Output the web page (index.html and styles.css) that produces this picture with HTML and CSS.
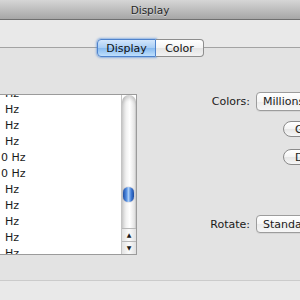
FILE: index.html
```html
<!DOCTYPE html>
<html lang="en">
<head>
    <meta charset="UTF-8">
    <title>Display</title>
    <link rel="stylesheet" href="styles.css">
</head>
<body>
    <div class="window">
        <div class="titlebar">Display</div>

        <div class="content">
            <div class="segmented">
                <button class="segment active" type="button">Display</button>
                <button class="segment" type="button">Color</button>
            </div>

            <div class="tabbox">
                <div class="listbox">
                    <div class="rows">
                        <div class="row">Hz</div>
                        <div class="row">Hz</div>
                        <div class="row">Hz</div>
                        <div class="row">Hz</div>
                        <div class="row wide">0 Hz</div>
                        <div class="row wide">0 Hz</div>
                        <div class="row">Hz</div>
                        <div class="row">Hz</div>
                        <div class="row">Hz</div>
                        <div class="row">Hz</div>
                        <div class="row">Hz</div>
                    </div>
                    <div class="scrollbar">
                        <div class="track">
                            <div class="thumb"></div>
                        </div>
                        <div class="arrow up">&#9650;</div>
                        <div class="arrow down">&#9660;</div>
                    </div>
                </div>

                <div class="options">
                    <div class="field">
                        <label class="field-label">Colors:</label>
                        <div class="popup">Millions</div>
                    </div>
                    <button class="pill first" type="button">Gather Windows</button>
                    <button class="pill second" type="button">Detect Displays</button>
                    <div class="field rotate">
                        <label class="field-label">Rotate:</label>
                        <div class="popup small">Standard</div>
                    </div>
                </div>
            </div>
        </div>
    </div>
</body>
</html>
```

FILE: styles.css
```css
body {
    margin: 0;
    font-family: 'DejaVu Sans', 'Liberation Sans', sans-serif;
    font-size: 11px;
    color: #1a1a1a;
    background-color: #e9e9e9;
    overflow: hidden;
}

.window {
    width: 300px;
    height: 300px;
    overflow: hidden;
    background-color: #e9e9e9;
}

.titlebar {
    height: 19px;
    line-height: 20px;
    text-align: center;
    font-size: 10.5px;
    color: #262626;
    text-shadow: 0 1px 0 rgba(255, 255, 255, 0.45);
    background: linear-gradient(#d6d6d6, #b9b9b9 60%, #a6a6a6);
    border-bottom: 1px solid #6f6f6f;
}

.content {
    padding-top: 19px;
}

.segmented {
    position: relative;
    z-index: 1;
    display: flex;
    justify-content: center;
    height: 18px;
    margin-bottom: -10px;
}

.segment {
    font-family: inherit;
    font-size: 11px;
    color: #111;
    height: 18px;
    padding: 0;
    margin: 0;
    border: 1px solid #8e8e8e;
    background: linear-gradient(#ffffff, #f3f3f3 50%, #e4e4e4 51%, #f2f2f2);
}

.segment.active {
    width: 59px;
    margin-left: 1px;
    border-color: #4f83cc;
    border-radius: 4px 0 0 4px;
    background: linear-gradient(#d3e6fb, #a7cdf5 50%, #86b9ef 51%, #bfe0fd);
    box-shadow: 0 0 2px 1px rgba(80, 140, 220, 0.6);
}

.segment:last-child {
    width: 48px;
    border-left: none;
    border-radius: 0 4px 4px 0;
}

.tabbox {
    display: flex;
    align-items: flex-start;
    height: 234px;
    padding-top: 44px;
    box-sizing: border-box;
    background-color: #e3e3e3;
    border-top: 1px solid #a3a3a3;
    border-bottom: 1px solid #cbcbcb;
}

.listbox {
    display: flex;
    flex-shrink: 0;
    width: 138px;
    height: 161px;
    margin-top: 2px;
    margin-left: -1px;
    box-sizing: border-box;
    background-color: #fff;
    border: 1px solid #9b9b9b;
    overflow: hidden;
}

.rows {
    flex: 1;
    margin-top: -9px;
}

.row {
    height: 16px;
    line-height: 16px;
    padding-left: 5px;
    font-size: 11px;
    white-space: nowrap;
}

.row.wide {
    padding-left: 1px;
}

.scrollbar {
    display: flex;
    flex-direction: column;
    width: 14px;
    border-left: 1px solid #c4c4c4;
}

.track {
    flex: 1;
    padding-top: 92px;
    border-radius: 7px 7px 0 0;
    background: linear-gradient(90deg, #cdcdcd, #f2f2f2 30%, #ffffff 55%, #e4e4e4 90%, #c8c8c8);
    box-shadow: inset 0 5px 4px -2px rgba(0, 0, 0, 0.18);
}

.thumb {
    width: 11px;
    height: 15px;
    margin-left: 1px;
    border-radius: 6px;
    background: linear-gradient(90deg, #1f4fa3, #4f8ae0 30%, #a9cdf6 50%, #3f7ad6 75%, #1d4c9f);
    box-shadow: 0 0 1px rgba(0, 0, 60, 0.7);
}

.arrow {
    height: 12px;
    line-height: 12px;
    font-size: 6px;
    text-align: center;
    color: #1a1a1a;
    border-top: 1px solid #b8b8b8;
    background: linear-gradient(90deg, #e2e2e2, #fbfbfb 50%, #e0e0e0);
}

.options {
    display: flex;
    flex-direction: column;
    flex: 1;
    min-width: 0;
}

.field {
    display: flex;
    align-items: center;
    gap: 6px;
}

.field-label {
    width: 113px;
    flex-shrink: 0;
    text-align: right;
    white-space: nowrap;
}

.popup {
    width: 120px;
    flex-shrink: 0;
    height: 19px;
    line-height: 18px;
    padding-left: 6px;
    box-sizing: border-box;
    border: 1px solid #9c9c9c;
    border-radius: 4px;
    background: linear-gradient(#ffffff, #f6f6f6 50%, #ebebeb 51%, #f7f7f7);
    box-shadow: 0 1px 0 rgba(0, 0, 0, 0.06);
    white-space: nowrap;
}

.popup.small {
    height: 18px;
    line-height: 17px;
}

.pill {
    font-family: inherit;
    font-size: 11px;
    color: #1a1a1a;
    flex-shrink: 0;
    width: 110px;
    height: 16px;
    margin-left: 146px;
    padding: 0 0 0 11px;
    text-align: left;
    white-space: nowrap;
    border: 1px solid #8a8a8a;
    border-radius: 8px;
    background: linear-gradient(#ffffff, #f4f4f4 50%, #e6e6e6 51%, #f6f6f6);
}

.pill.first {
    margin-top: 10px;
}

.pill.second {
    margin-top: 12px;
}

.field.rotate {
    margin-top: 50px;
}
```
